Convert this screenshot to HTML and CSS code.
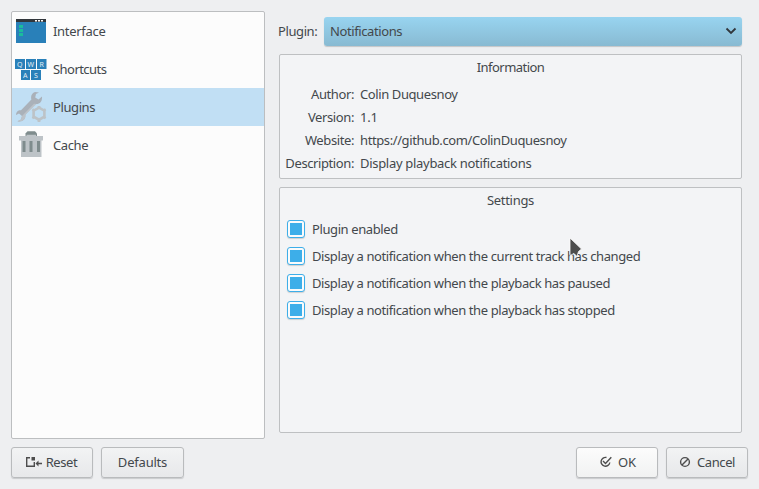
FILE: index.html
```html
<!DOCTYPE html>
<html lang="en">
<head>
<meta charset="utf-8">
<title>Settings</title>
<link rel="stylesheet" href="styles.css">
</head>
<body>
<main class="dialog">
  <div class="content">
    <nav class="sidebar">
      <a class="item">
        <svg class="item-icon" width="32" height="32" viewBox="0 0 32 32"><path fill="#2980b9" d="M1 4h30v24H1z"/><path fill="#31363b" d="M1 4h30v3H1z"/><path fill="#fcfcfc" d="M20 5h2v1.500h-2zM23 5h2v1.500h-2zM26 5h2v1.500h-2z"/><path fill="#1abc9c" d="M4 10h4v3H4zM4 14h4v3H4zM4 18h4v3H4z"/></svg>
        <span class="normal">Interface</span>
      </a>
      <a class="item">
        <svg class="item-icon" width="32" height="32" viewBox="0 0 32 32"><path fill="#2980b9" d="M0 6h10v10H0zM11 6h10v10H11zM22 6h9.500v10H22zM6 17h9v10H6zM16 17h10v10H16z"/><g class="keycaps"><text x="4.700" y="13.500">Q</text><text x="15.700" y="13.500">W</text><text x="26.700" y="13.500">R</text><text x="10.300" y="24.500">A</text><text x="21" y="24.500">S</text></g></svg>
        <span class="narrow">Shortcuts</span>
      </a>
      <a class="item selected">
        <svg class="item-icon" width="32" height="32" viewBox="0 0 32 32"><path fill="#aab1b9" d="M20 1c-3 1-4.500 4-3.600 7.500L6 19.300c-2.500-.5-5 1.700-5 4.700l3-1.500 3 2.500-1 3.500-3.500 1.700c5 1 8.500-2 7.800-6.500L20 13c4.500.8 7.500-2.500 7-7.500l-3.500 3-3.300-2L21 3l3-1.500z"/><path fill="#bdc3c9" d="M2.500 30.200 6 28.500 7 25 19 12.800l2.500.2-11.200 10.700c.7 4.500-2.800 7.500-7.800 6.500z"/><circle cx="24" cy="22.700" r="7.300" fill="#c1dff4"/><path fill="none" stroke="#bdc3c7" stroke-width="2.600" d="m24 16.700 5.400 3v6L24 28.700l-5.400-3v-6z"/><path fill="#bdc3c7" d="M22.600 15h2.800v2h-2.800zM22.600 28.500h2.800v2.500h-2.800zM16.700 19.300l1.300-2 2.200 1.300-1.200 2.200zM31.300 19.300l-1.300-2-2.200 1.300 1.200 2.200zM16.700 26.300l1.300 2 2.200-1.300-1.200-2.200zM31.300 26.300l-1.300 2-2.200-1.300 1.200-2.200z"/></svg>
        <span>Plugins</span>
      </a>
      <a class="item">
        <svg class="item-icon" width="32" height="32" viewBox="0 0 32 32"><path fill="#7f8c8d" d="M10.500 7V4.500l2-2.300h7.500l2 2.300V7z"/><path fill="#bdc3c7" d="M4 7h24v4.500h-1.500V28H6V11.500H4zM11.500 5.800h9.500V7h-9.500z"/><path fill="#7f8c8d" d="M7.500 12h3v11h-3zM14.500 12h3v11h-3zM22 12h3v11h-3z"/></svg>
        <span>Cache</span>
      </a>
    </nav>
    <section class="details">
      <div class="picker">
        <label class="picker-label">Plugin:</label>
        <div class="combo"><span>Notifications</span>
          <svg class="chevron" width="12" height="8" viewBox="0 0 12 8"><path fill="none" stroke="#31363b" stroke-width="1.800" d="m1.500 1.500 4.500 4.500 4.500-4.500"/></svg>
        </div>
      </div>
      <section class="panel information">
        <h2 class="narrow">Information</h2>
        <dl>
          <dt>Author:</dt><dd>Colin Duquesnoy</dd>
          <dt>Version:</dt><dd class="wide">1.1</dd>
          <dt>Website:</dt><dd>https://github.com/ColinDuquesnoy</dd>
          <dt>Description:</dt><dd class="normal">Display playback notifications</dd>
        </dl>
      </section>
      <section class="panel settings">
        <h2 class="normal">Settings</h2>
        <label class="check"><i class="box"></i><span>Plugin enabled</span></label>
        <label class="check"><i class="box"></i><span>Display a notification when the current track has changed</span></label>
        <label class="check"><i class="box"></i><span>Display a notification when the playback has paused</span></label>
        <label class="check"><i class="box"></i><span>Display a notification when the playback has stopped</span></label>
      </section>
    </section>
  </div>
  <footer class="actions">
    <button class="btn reset"><svg width="17" height="12" viewBox="0 0 17 12"><path fill="none" stroke="#4d4d4d" stroke-width="1.400" d="M5 1.700H1.700v8.600h7.600V6"/><path fill="#4d4d4d" d="M6.500 1H10v3.500H6.500zM10.500 7.500l3-3v2.200H17v1.600h-3.500v2.200z"/></svg><span>Reset</span></button>
    <button class="btn defaults"><span class="wide">Defaults</span></button>
    <button class="btn ok"><svg width="12" height="12" viewBox="0 0 12 12"><path fill="none" stroke="#4d4d4d" stroke-width="1.400" d="M6.500 1.500A4.400 4.400 0 1 0 9.800 6.500M3 5l2.500 2.500L11.300 1.200"/></svg><span class="wide">OK</span></button>
    <button class="btn cancel"><svg width="12" height="12" viewBox="0 0 12 12"><circle cx="6" cy="6" r="4.400" fill="none" stroke="#4d4d4d" stroke-width="1.400"/><path stroke="#4d4d4d" stroke-width="1.400" d="m3 9 6-6"/></svg><span>Cancel</span></button>
  </footer>
  <svg class="pointer" width="14" height="22" viewBox="0 0 14 22"><path fill="#4d4d4d" stroke="#fcfcfc" stroke-width=".8" d="M1 1v17.500l4-2 3 3 1.500-5L12.500 12z"/></svg>
</main>
</body>
</html>
```
FILE: styles.css
```css
* { box-sizing: border-box; }
body {
  margin: 0;
  background: #eeeff1;
  color: #43484c;
  font: 13px/20px "Noto Sans", "Open Sans", sans-serif;
  letter-spacing: -0.4px;
}
.wide { letter-spacing: -0.2px; }
.normal { letter-spacing: -0.3px; }
.narrow { letter-spacing: -0.55px; }
.dialog {
  position: relative;
  width: 759px;
  height: 489px;
  padding: 11px;
  overflow: hidden;
}
.content { display: flex; gap: 13px; height: 428px; }
.sidebar {
  width: 254px;
  background: #fcfcfc;
  border: 1px solid #bcbec0;
  border-radius: 2px;
}
.item { display: flex; align-items: center; height: 38px; padding-left: 3px; gap: 6px; }
.item-icon { flex: none; }
.selected { background: #c1dff4; }
.keycaps { fill: #e4eef5; font-size: 7px; letter-spacing: 0; text-anchor: middle; }
.details { width: 465px; padding-top: 6px; }
.picker { display: flex; align-items: center; height: 29px; }
.picker-label { width: 46px; padding-bottom: 1px; white-space: nowrap; }
.combo {
  display: flex;
  align-items: center;
  justify-content: space-between;
  width: 418px;
  height: 29px;
  padding: 0 5px 1px 6px;
  border-radius: 3px;
  background: linear-gradient(#98d4f0, #88bad2);
  box-shadow: 0 1px 1px #c2c5c7;
}
.panel {
  width: 463px;
  margin-left: 1px;
  background: #f3f4f6;
  border: 1px solid #bec0c2;
  border-radius: 2px;
}
.panel h2 { margin: 0; font-size: 13px; font-weight: 400; line-height: 20px; text-align: center; }
.information { height: 125px; margin-top: 8px; padding-top: 2px; }
.information dl {
  display: grid;
  grid-template-columns: 74px 1fr;
  grid-auto-rows: 23px;
  column-gap: 6px;
  margin: 6px 0 0;
  line-height: 23px;
}
.information dt { text-align: right; white-space: nowrap; }
.information dd { margin: 0; }
.settings { height: 246px; margin-top: 8px; padding-top: 2px; }
.settings h2 { margin-bottom: 5px; }
.check { display: flex; align-items: center; height: 27px; padding-left: 7px; gap: 7px; white-space: nowrap; }
.box {
  width: 18px;
  height: 18px;
  border: 1px solid #3daee9;
  border-radius: 3px;
  background: linear-gradient(#3daee9, #3daee9) center / 12px 12px no-repeat #fafbfc;
  box-shadow: 0 1px 1px #ced0d2;
}
.actions { display: flex; margin-top: 8px; }
.btn {
  display: flex;
  align-items: center;
  justify-content: center;
  height: 31px;
  padding: 0 0 2px;
  border: 1px solid #b9bbbd;
  border-radius: 3px;
  background: linear-gradient(#f2f3f4, #e7e8ea);
  box-shadow: 0 1px 1px #c8cacc;
  color: inherit;
  font: inherit;
  letter-spacing: inherit;
}
.reset { width: 82px; gap: 4px; padding-right: 2px; }
.defaults { width: 83px; margin-left: 8px; }
.ok { width: 82px; margin-left: auto; padding-left: 2px; gap: 6px; background: linear-gradient(#fcfcfc, #f1f2f2); }
.cancel { width: 82px; margin-left: 8px; gap: 6px; }
.pointer { position: absolute; left: 569px; top: 237px; }
```
